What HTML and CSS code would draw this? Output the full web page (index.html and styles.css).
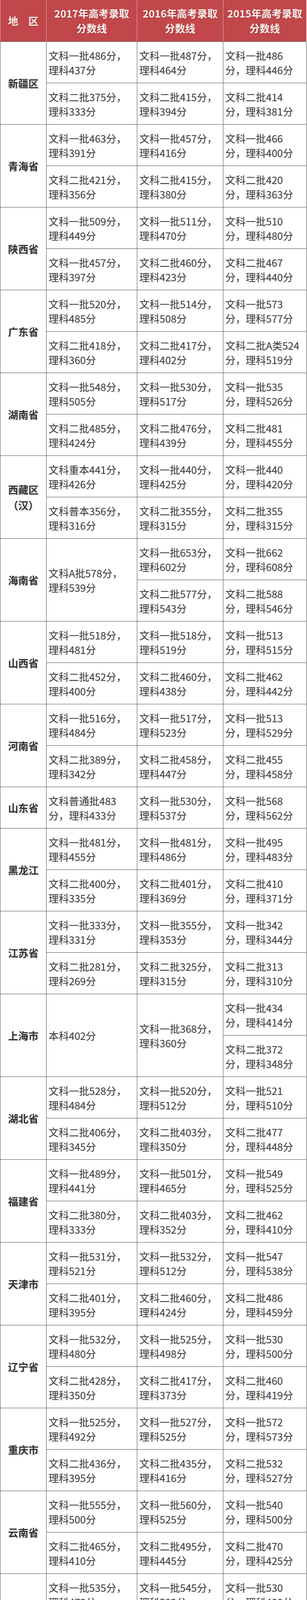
FILE: index.html
```html
<!DOCTYPE html>
<html lang="zh-CN">
<head>
<meta charset="utf-8">
<title>2015-2017年高考录取分数线</title>
<link rel="stylesheet" href="styles.css">
</head>
<body>
<div class="sheet">
  <div class="head">
    <div class="hcell">地　区</div>
    <div class="hcell">2017年高考录取<br>分数线</div>
    <div class="hcell">2016年高考录取<br>分数线</div>
    <div class="hcell">2015年高考录取<br>分数线</div>
  </div>
  <div class="body">
    <div class="prov span2">新疆区</div>
    <div class="c">文科一批486分，<br>理科437分</div>
    <div class="c">文科一批487分，<br>理科464分</div>
    <div class="c">文科一批486<br>分，理科446分</div>
    <div class="c">文科二批375分，<br>理科333分</div>
    <div class="c">文科二批415分，<br>理科394分</div>
    <div class="c">文科二批414<br>分，理科381分</div>

    <div class="prov span2">青海省</div>
    <div class="c">文科一批463分，<br>理科391分</div>
    <div class="c">文科一批457分，<br>理科416分</div>
    <div class="c">文科一批466<br>分，理科400分</div>
    <div class="c">文科二批421分，<br>理科356分</div>
    <div class="c">文科二批415分，<br>理科380分</div>
    <div class="c">文科二批420<br>分，理科363分</div>

    <div class="prov span2">陕西省</div>
    <div class="c">文科一批509分，<br>理科449分</div>
    <div class="c">文科一批511分，<br>理科470分</div>
    <div class="c">文科一批510<br>分，理科480分</div>
    <div class="c">文科一批457分，<br>理科397分</div>
    <div class="c">文科二批460分，<br>理科423分</div>
    <div class="c">文科二批467<br>分，理科440分</div>

    <div class="prov span2">广东省</div>
    <div class="c">文科一批520分，<br>理科485分</div>
    <div class="c">文科一批514分，<br>理科508分</div>
    <div class="c">文科一批573<br>分，理科577分</div>
    <div class="c">文科二批418分，<br>理科360分</div>
    <div class="c">文科二批417分，<br>理科402分</div>
    <div class="c">文科二批A类524<br>分，理科519分</div>

    <div class="prov span2">湖南省</div>
    <div class="c">文科一批548分，<br>理科505分</div>
    <div class="c">文科一批530分，<br>理科517分</div>
    <div class="c">文科一批535<br>分，理科526分</div>
    <div class="c">文科二批485分，<br>理科424分</div>
    <div class="c">文科二批476分，<br>理科439分</div>
    <div class="c">文科二批481<br>分，理科455分</div>

    <div class="prov span2 tall">西藏区<br>（汉）</div>
    <div class="c">文科重本441分，<br>理科426分</div>
    <div class="c">文科一批440分，<br>理科425分</div>
    <div class="c">文科一批440<br>分，理科420分</div>
    <div class="c">文科普本356分，<br>理科316分</div>
    <div class="c">文科二批355分，<br>理科315分</div>
    <div class="c">文科二批355<br>分，理科315分</div>

    <div class="prov span2">海南省</div>
    <div class="c span2">文科A批578分，<br>理科539分</div>
    <div class="c">文科一批653分，<br>理科602分</div>
    <div class="c">文科一批662<br>分，理科608分</div>
    <div class="c">文科二批577分，<br>理科543分</div>
    <div class="c">文科二批588<br>分，理科546分</div>

    <div class="prov span2">山西省</div>
    <div class="c">文科一批518分，<br>理科481分</div>
    <div class="c">文科一批518分，<br>理科519分</div>
    <div class="c">文科一批513<br>分，理科515分</div>
    <div class="c">文科二批452分，<br>理科400分</div>
    <div class="c">文科二批460分，<br>理科438分</div>
    <div class="c">文科二批462<br>分，理科442分</div>

    <div class="prov span2">河南省</div>
    <div class="c">文科一批516分，<br>理科484分</div>
    <div class="c">文科一批517分，<br>理科523分</div>
    <div class="c">文科一批513<br>分，理科529分</div>
    <div class="c">文科二批389分，<br>理科342分</div>
    <div class="c">文科二批458分，<br>理科447分</div>
    <div class="c">文科二批455<br>分，理科458分</div>

    <div class="prov">山东省</div>
    <div class="c">文科普通批483<br>分，理科433分</div>
    <div class="c">文科一批530分，<br>理科537分</div>
    <div class="c">文科一批568<br>分，理科562分</div>

    <div class="prov span2">黑龙江</div>
    <div class="c">文科一批481分，<br>理科455分</div>
    <div class="c">文科一批481分，<br>理科486分</div>
    <div class="c">文科一批495<br>分，理科483分</div>
    <div class="c">文科二批400分，<br>理科335分</div>
    <div class="c">文科二批401分，<br>理科369分</div>
    <div class="c">文科二批410<br>分，理科371分</div>

    <div class="prov span2">江苏省</div>
    <div class="c">文科一批333分，<br>理科331分</div>
    <div class="c">文科一批355分，<br>理科353分</div>
    <div class="c">文科一批342<br>分，理科344分</div>
    <div class="c">文科二批281分，<br>理科269分</div>
    <div class="c">文科二批325分，<br>理科315分</div>
    <div class="c">文科二批313<br>分，理科310分</div>

    <div class="prov span2">上海市</div>
    <div class="c span2">本科402分</div>
    <div class="c span2">文科一批368分，<br>理科360分</div>
    <div class="c">文科一批434<br>分，理科414分</div>
    <div class="c">文科二批372<br>分，理科348分</div>

    <div class="prov span2">湖北省</div>
    <div class="c">文科一批528分，<br>理科484分</div>
    <div class="c">文科一批520分，<br>理科512分</div>
    <div class="c">文科一批521<br>分，理科510分</div>
    <div class="c">文科二批406分，<br>理科345分</div>
    <div class="c">文科二批403分，<br>理科350分</div>
    <div class="c">文科二批477<br>分，理科448分</div>

    <div class="prov span2">福建省</div>
    <div class="c">文科一批489分，<br>理科441分</div>
    <div class="c">文科一批501分，<br>理科465分</div>
    <div class="c">文科一批549<br>分，理科525分</div>
    <div class="c">文科二批380分，<br>理科333分</div>
    <div class="c">文科二批403分，<br>理科352分</div>
    <div class="c">文科二批462<br>分，理科410分</div>

    <div class="prov span2">天津市</div>
    <div class="c">文科一批531分，<br>理科521分</div>
    <div class="c">文科一批532分，<br>理科512分</div>
    <div class="c">文科一批547<br>分，理科538分</div>
    <div class="c">文科二批401分，<br>理科395分</div>
    <div class="c">文科二批460分，<br>理科424分</div>
    <div class="c">文科二批486<br>分，理科459分</div>

    <div class="prov span2">辽宁省</div>
    <div class="c">文科一批532分，<br>理科480分</div>
    <div class="c">文科一批525分，<br>理科498分</div>
    <div class="c">文科一批530<br>分，理科500分</div>
    <div class="c">文科二批428分，<br>理科350分</div>
    <div class="c">文科二批417分，<br>理科373分</div>
    <div class="c">文科二批460<br>分，理科419分</div>

    <div class="prov span2">重庆市</div>
    <div class="c">文科一批525分，<br>理科492分</div>
    <div class="c">文科一批527分，<br>理科525分</div>
    <div class="c">文科一批572<br>分，理科573分</div>
    <div class="c">文科二批436分，<br>理科395分</div>
    <div class="c">文科二批435分，<br>理科416分</div>
    <div class="c">文科二批532<br>分，理科527分</div>

    <div class="prov span2">云南省</div>
    <div class="c">文科一批555分，<br>理科500分</div>
    <div class="c">文科一批560分，<br>理科525分</div>
    <div class="c">文科一批540<br>分，理科500分</div>
    <div class="c">文科二批465分，<br>理科410分</div>
    <div class="c">文科二批495分，<br>理科445分</div>
    <div class="c">文科二批470<br>分，理科425分</div>

    <div class="prov span2">广西区</div>
    <div class="c">文科一批535分，<br>理科473分</div>
    <div class="c">文科一批545分，<br>理科502分</div>
    <div class="c">文科一批530<br>分，理科480分</div>
    <div class="c">文科二批387分，<br>理科318分</div>
    <div class="c">文科二批400分，<br>理科333分</div>
    <div class="c">文科二批380<br>分，理科320分</div>

    <div class="prov span2">安徽省</div>
    <div class="c">文科一批515分，<br>理科487分</div>
    <div class="c">文科一批521分，<br>理科518分</div>
    <div class="c">文科一批597<br>分，理科555分</div>
    <div class="c">文科二批440分，<br>理科413分</div>
    <div class="c">文科二批482分，<br>理科473分</div>
    <div class="c">文科二批558<br>分，理科511分</div>

    <div class="prov span2">江西省</div>
    <div class="c">文科一批533分，<br>理科503分</div>
    <div class="c">文科一批523分，<br>理科529分</div>
    <div class="c">文科一批528<br>分，理科540分</div>
    <div class="c">文科二批458分，<br>理科422分</div>
    <div class="c">文科二批450分，<br>理科445分</div>
    <div class="c">文科二批487<br>分，理科490分</div>

    <div class="prov span2">内蒙古</div>
    <div class="c">文科一批472分，<br>理科466分</div>
    <div class="c">文科一批474分，<br>理科484分</div>
    <div class="c">文科一批487<br>分，理科464分</div>
    <div class="c">文科二批375分，<br>理科328分</div>
    <div class="c">文科二批375分，<br>理科346分</div>
    <div class="c">文科二批385<br>分，理科336分</div>

    <div class="prov span2">贵州省</div>
    <div class="c">文科一批545分，<br>理科456分</div>
    <div class="c">文科一批551分，<br>理科473分</div>
    <div class="c">文科一批543<br>分，理科453分</div>
    <div class="c">文科二批453分，<br>理科361分</div>
    <div class="c">文科二批457分，<br>理科365分</div>
    <div class="c">文科二批472<br>分，理科372分</div>

    <div class="prov span2">北京市</div>
    <div class="c">文科一批555分，<br>理科537分</div>
    <div class="c">文科一批583分，<br>理科548分</div>
    <div class="c">文科一批579<br>分，理科548分</div>
    <div class="c">文科二批468分，<br>理科439分</div>
    <div class="c">文科二批532分，<br>理科494分</div>
    <div class="c">文科二批527<br>分，理科495分</div>

    <div class="prov span2">宁夏区</div>
    <div class="c">文科一批519分，<br>理科439分</div>
    <div class="c">文科一批516分，<br>理科465分</div>
    <div class="c">文科一批507<br>分，理科445分</div>
    <div class="c">文科二批487分，<br>理科408分</div>
    <div class="c">文科二批486分，<br>理科434分</div>
    <div class="c">文科二批478<br>分，理科416分</div>

    <div class="prov span2">河北省</div>
    <div class="c">文科一批517分，<br>理科485分</div>
    <div class="c">文科一批535分，<br>理科525分</div>
    <div class="c">文科一批548<br>分，理科544分</div>
    <div class="c">文科二批395分，<br>理科326分</div>
    <div class="c">文科二批416分，<br>理科364分</div>
    <div class="c">文科二批496<br>分，理科474分</div>

    <div class="prov span2">四川省</div>
    <div class="c">文科一批537分，<br>理科511分</div>
    <div class="c">文科一批540分，<br>理科532分</div>
    <div class="c">文科一批543<br>分，理科528分</div>
    <div class="c">文科二批470分，<br>理科436分</div>
    <div class="c">文科二批480分，<br>理科453分</div>
    <div class="c">文科二批473<br>分，理科445分</div>

    <div class="prov span2">甘肃省</div>
    <div class="c">文科一批505分，<br>理科460分</div>
    <div class="c">文科一批504分，<br>理科490分</div>
    <div class="c">文科一批517<br>分，理科475分</div>
    <div class="c">文科二批458分，<br>理科408分</div>
    <div class="c">文科二批455分，<br>理科435分</div>
    <div class="c">文科二批465<br>分，理科417分</div>

    <div class="prov">浙江省</div>
    <div class="c three">一段577分，二段<br>480分，三段359<br>分</div>
    <div class="c">文科一批603分，<br>理科600分</div>
    <div class="c">文科一批626<br>分，理科605分</div>

    <div class="prov span2">吉林省</div>
    <div class="c">文科一批528分，<br>理科507分</div>
    <div class="c">文科一批531分，<br>理科530分</div>
    <div class="c">文科一批543<br>分，理科525分</div>
    <div class="c">文科二批412分，<br>理科379分</div>
    <div class="c">文科二批413分，<br>理科402分</div>
    <div class="c">文科二批433<br>分，理科405分</div>
  </div>
</div>
</body>
</html>
```
FILE: styles.css
```css
html, body {
  margin: 0;
  padding: 0;
  background: #ffffff;
}

.sheet {
  width: 784px;
  font-family: "Noto Sans CJK SC", "Microsoft YaHei", "Noto Sans", sans-serif;
}

.head,
.body {
  display: grid;
  grid-template-columns: 117px 231px 219px 212px;
  column-gap: 1px;
  padding: 0 1px;
}

.head {
  grid-template-rows: 106px;
  background: #e7b3b2;
}

.hcell {
  background: #c1474b;
  color: #fff3f0;
  font-weight: 700;
  font-size: 26px;
  line-height: 38px;
  display: flex;
  align-items: center;
  justify-content: center;
  text-align: center;
  white-space: nowrap;
  text-shadow: 1px 1px 2px rgba(90, 10, 10, 0.45);
}

.body {
  grid-auto-rows: 105px;
  row-gap: 1px;
  padding: 1px;
  background: #4a4a4a;
}

.prov {
  background: #ffffff;
  color: #333333;
  font-weight: 700;
  font-size: 26px;
  line-height: 40px;
  display: flex;
  align-items: center;
  justify-content: center;
  text-align: center;
  white-space: nowrap;
  text-shadow: 2px 2px 3px rgba(0, 0, 0, 0.12);
}

.c {
  background: #ffffff;
  color: #3e3e3e;
  font-size: 26px;
  line-height: 37px;
  padding-left: 5px;
  display: flex;
  align-items: center;
  white-space: nowrap;
  text-shadow: 1px 1px 2px rgba(0, 0, 0, 0.12);
}

.span2 {
  grid-row: span 2;
}

.three {
  line-height: 36px;
}
```
